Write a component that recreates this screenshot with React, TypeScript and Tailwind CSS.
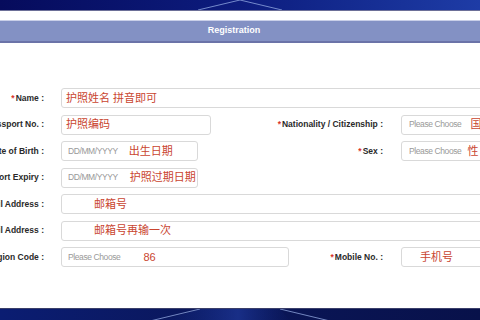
import React from 'react';

const FONT = { fontFamily: '"Liberation Sans", Arial, "Noto Sans CJK SC", sans-serif' };

function Label({ text, required }: { text: string; required?: boolean }) {
  return (
    <span className="whitespace-nowrap text-[8.5px] font-bold text-[#2a2a2a]">
      {required && <span className="mr-[1px] text-[#d9342b]">*</span>}
      {text}
    </span>
  );
}

function Box({ className = '', children }: { className?: string; children?: React.ReactNode }) {
  return (
    <div
      className={`flex h-[20px] shrink-0 items-center overflow-hidden whitespace-nowrap rounded-[3px] border border-[#d9d9d9] bg-white ${className}`}
    >
      {children}
    </div>
  );
}

const Hint = ({ children, className = '' }: { children: React.ReactNode; className?: string }) => (
  <span className={`text-[11px] leading-none text-[#c9452f] ${className}`}>{children}</span>
);

const Ph = ({ children, className = '' }: { children: React.ReactNode; className?: string }) => (
  <span className={`text-[8.5px] tracking-[-0.4px] leading-none text-[#999999] ${className}`}>{children}</span>
);

function Row({
  label,
  required,
  left,
  leftWidth,
  rightLabel,
  right,
}: {
  label: string;
  required?: boolean;
  left: React.ReactNode;
  leftWidth?: string;
  rightLabel?: string;
  right?: React.ReactNode;
}) {
  return (
    <div className="flex h-[20px] items-center">
      <div className="flex w-[61px] shrink-0 justify-end pr-[17px]">
        <Label text={label} required={required} />
      </div>
      {leftWidth ? (
        <>
          <Box className={leftWidth}>{left}</Box>
          <div className="flex flex-1 justify-end pr-[18px]">
            {rightLabel && <Label text={rightLabel} required />}
          </div>
          <div className="w-[120px] shrink-0">{right}</div>
        </>
      ) : (
        <Box className="flex-1">{left}</Box>
      )}
    </div>
  );
}

export default function App() {
  return (
    <div className="relative flex h-[320px] w-[480px] flex-col overflow-hidden bg-white" style={FONT}>
      {/* top banner */}
      <div className="relative h-[11px] shrink-0 border-b border-[#6d7098] bg-gradient-to-r from-[#060b5c] via-[#0d1c7e] to-[#1e3ca6]">
        <svg className="absolute left-0 top-0" width="480" height="10" viewBox="0 0 480 10">
          <path d="M198 10 L240 0 L282 10" stroke="#8fa6e0" strokeWidth="0.8" fill="none" />
        </svg>
      </div>
      <div className="h-[9px] shrink-0" />
      <div className="flex h-[23px] shrink-0 items-center justify-center border-t border-[#c9cfe8] border-b-2 border-b-[#6b73a8] bg-[#8391c4] pr-[12px]">
        <span className="text-[9px] font-bold text-white">Registration</span>
      </div>

      {/* form */}
      <div className="flex w-[521px] flex-col gap-[6.5px] pt-[45px]">
        <Row
          label="Name :"
          required
          left={<Hint className="ml-[4px]">护照姓名 拼音即可</Hint>}
        />
        <Row
          label="Passport No. :"
          leftWidth="w-[150px]"
          left={<Hint className="ml-[4px]">护照编码</Hint>}
          rightLabel="Nationality / Citizenship :"
          right={
            <Box className="w-[120px]">
              <Ph className="ml-[7px]">Please Choose</Ph>
              <Hint className="ml-[9px]">国</Hint>
            </Box>
          }
        />
        <Row
          label="Date of Birth :"
          leftWidth="w-[137px]"
          left={
            <>
              <Ph className="ml-[6px]">DD/MM/YYYY</Ph>
              <Hint className="ml-[11px]">出生日期</Hint>
            </>
          }
          rightLabel="Sex :"
          right={
            <Box className="w-[120px]">
              <Ph className="ml-[7px]">Please Choose</Ph>
              <Hint className="ml-[6px]">性</Hint>
            </Box>
          }
        />
        <Row
          label="Passport Expiry :"
          leftWidth="w-[137px]"
          left={
            <>
              <Ph className="ml-[6px]">DD/MM/YYYY</Ph>
              <Hint className="ml-[12px]">护照过期日期</Hint>
            </>
          }
        />
        <Row label="Email Address :" left={<Hint className="ml-[32px]">邮箱号</Hint>} />
        <Row label="Confirm Email Address :" left={<Hint className="ml-[32px]">邮箱号再输一次</Hint>} />
        <Row
          label="Region Code :"
          leftWidth="w-[228px]"
          left={
            <>
              <Ph className="ml-[6px]">Please Choose</Ph>
              <Hint className="ml-[23px]">86</Hint>
            </>
          }
          rightLabel="Mobile No. :"
          right={
            <Box className="w-[120px]">
              <Hint className="ml-[18px]">手机号</Hint>
            </Box>
          }
        />
      </div>

      <div className="flex-1" />
      {/* bottom banner */}
      <div className="relative h-[12px] shrink-0 border-t border-[#3a3f6a] bg-gradient-to-r from-[#0b1d72] via-[#0a1658] to-[#08114a]">
        <svg className="absolute left-0 top-0" width="480" height="12" viewBox="0 0 480 12">
          <defs>
            <linearGradient id="glow" x1="0" x2="1" y1="0" y2="0">
              <stop offset="0" stopColor="#1c3caa" stopOpacity="0" />
              <stop offset="0.6" stopColor="#2a4cc0" stopOpacity="0.9" />
              <stop offset="1" stopColor="#1c3caa" stopOpacity="0" />
            </linearGradient>
          </defs>
          <path d="M200 0 L280 0 L290 12 L160 12 Z" fill="url(#glow)" opacity="0.5" />
          <path d="M150 12 L200 0" stroke="#8ea3dc" strokeWidth="0.8" />
          <path d="M280 0 L330 12" stroke="#8ea3dc" strokeWidth="0.8" />
        </svg>
      </div>
    </div>
  );
}
